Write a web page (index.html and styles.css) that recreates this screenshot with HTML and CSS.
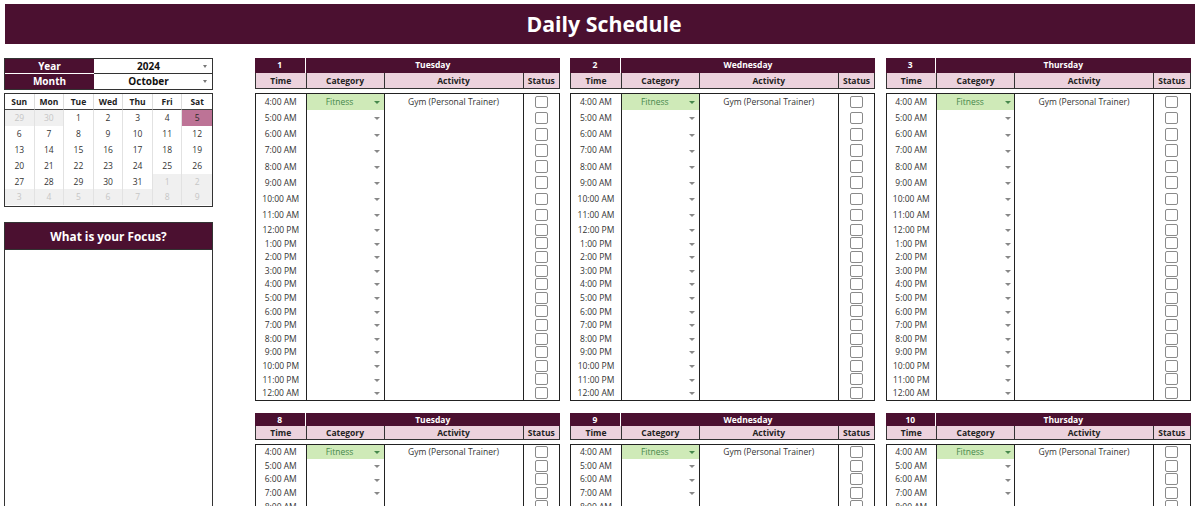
FILE: index.html
```html
<!DOCTYPE html>
<html lang="en">
<head>
<meta charset="utf-8">
<title>Daily Schedule</title>
<link rel="stylesheet" href="styles.css">
<script src="app.js" defer></script>
</head>
<body>
<header class="title">Daily Schedule</header>
<main class="page">
  <aside class="side">
    <div class="picker">
      <div class="picker-label">Year</div><div class="picker-value dd">2024</div>
      <div class="picker-label">Month</div><div class="picker-value dd">October</div>
    </div>
    <div class="cal" id="cal"></div>
    <section class="focus">
      <h2 class="focus-head">What is your Focus?</h2>
    </section>
  </aside>
  <div class="days" id="days"></div>
</main>
</body>
</html>
```
FILE: styles.css
```css
* { box-sizing: border-box; }
html, body { margin: 0; height: 506px; overflow: hidden; background: #fff; }
body { padding: 4px 5px 0; font-family: "Open Sans", sans-serif; font-size: 8.5px; color: #333; }
.title { height: 40px; padding: 0 0 0 8px; background: #4b1030; color: #fff; font-size: 21.3px; font-weight: 700; line-height: 39px; text-align: center; }
.page { display: flex; margin-top: 14px; gap: 42px; align-items: flex-start; }
.side { width: 209px; flex: none; margin-left: -1px; display: flex; flex-direction: column; }
.picker { display: grid; grid-template-columns: 89px 1fr; grid-template-rows: 15px 15px; border: 1px solid #333; height: 32px; row-gap: 0; }
.picker-label { background: #4b1030; color: #fff; font-weight: 700; font-size: 10px; line-height: 15px; text-align: center; border-bottom: 1px solid #fff; }
.picker-value { padding-right: 9px; font-weight: 700; font-size: 10px; color: #111; line-height: 15px; text-align: center; border-bottom: 1px solid #333; position: relative; }
.picker-value:last-child, .picker-label:nth-last-child(2) { border-bottom: 0; }
.dd::after { content: ""; position: absolute; right: 5px; top: 6px; border: 2.5px solid transparent; border-top: 3px solid #777; border-bottom: 0; }
.cal { margin-top: 3px; border: 1px solid #333; display: grid; grid-template-columns: repeat(7, 1fr); grid-template-rows: 16px repeat(6, 15.9px); height: 113.5px; }
.cal-h { font-weight: 700; color: #222; text-align: center; line-height: 15px; border-bottom: 1px solid #444; border-right: 1px solid #ddd; }
.cal-d { text-align: center; line-height: 15.9px; border-right: 1px solid #e2e2e2; color: #333; }
.cal-h:nth-child(7n), .cal-d:nth-child(7n) { border-right: 0; }
.cal-d.off { background: #f0f0f0; color: #c6c6c6; }
.cal-d.today { background: #bd7396; color: #2a2a2a; }
.focus { margin-top: 15.5px; height: 290px; border: 1px solid #333; }
.focus-head { margin: 0; height: 27px; background: #4b1030; color: #fff; font-size: 11.8px; font-weight: 700; line-height: 27px; text-align: center; border-bottom: 1px solid #333; }
.days { display: grid; grid-template-columns: repeat(3, 305px); column-gap: 10.25px; row-gap: 12.5px; }
.day { display: flex; flex-direction: column; }
.cols { display: grid; grid-template-columns: 50.5px 78px 139px 1fr; }
.top { display: grid; grid-template-columns: 50.5px 1fr; height: 15px; background: #4b1030; color: #fff; font-weight: 700; line-height: 14px; text-align: center; }
.top > :first-child { border-right: 1px solid #fff; }
.heads { height: 16px; background: #ecd2dd; color: #222; font-weight: 700; line-height: 15px; text-align: center; border-bottom: 1px solid #333; border-left: 1px solid #333; border-right: 1px solid #333; }
.heads > div { border-right: 1px solid #333; }
.heads > div:last-child { border-right: 0; }
.day.second .top { height: 13px; line-height: 13px; }
.day.second .heads { height: 14px; line-height: 13px; }
.sched { margin-top: 4px; border: 1px solid #222; }
.row { height: 16.13px; line-height: 16px; text-align: center; }
.row.short { height: 13.6px; line-height: 13.6px; }
.row > div { border-right: 1px solid #222; height: 100%; position: relative; }
.row > div:last-child { border-right: 0; }
.cat { padding-right: 11px; }
.cat::after { content: ""; position: absolute; right: 3.5px; top: 45%; border: 3px solid transparent; border-top: 3px solid #888; border-bottom: 0; }
.cat.fit { background: #cfeab8; color: #47884c; }
.cat.fit::after { border-top-color: #47884c; }
.st { display: flex; align-items: center; justify-content: center; }
.st::before { content: ""; width: 11px; height: 10.5px; border: 1.5px solid #8a8a8a; border-radius: 2px; background: #fff; }
.row.short .st::before { height: 10px; }
```
FILE: app.js
```js
const cal = document.getElementById('cal');
const hs = ['Sun','Mon','Tue','Wed','Thu','Fri','Sat'];
const ds = [29,30,1,2,3,4,5,6,7,8,9,10,11,12,13,14,15,16,17,18,19,20,21,22,23,24,25,26,27,28,29,30,31,1,2,3,4,5,6,7,8,9];
let h = hs.map(d => `<div class="cal-h">${d}</div>`).join('');
ds.forEach((d, i) => {
  const off = i < 2 || i > 32;
  const cls = off ? ' off' : (i === 6 ? ' today' : '');
  h += `<div class="cal-d${cls}">${d}</div>`;
});
cal.innerHTML = h;

const times = ['4:00 AM','5:00 AM','6:00 AM','7:00 AM','8:00 AM','9:00 AM','10:00 AM','11:00 AM','12:00 PM','1:00 PM','2:00 PM','3:00 PM','4:00 PM','5:00 PM','6:00 PM','7:00 PM','8:00 PM','9:00 PM','10:00 PM','11:00 PM','12:00 AM'];
const days = [[1,'Tuesday',0],[2,'Wednesday',0],[3,'Thursday',0],[8,'Tuesday',1],[9,'Wednesday',1],[10,'Thursday',1]];
document.getElementById('days').innerHTML = days.map(([n, name, second]) => {
  const list = second ? times.slice(0, 5) : times;
  const rows = list.map((t, i) => {
    const short = second || i >= 8;
    return `<div class="cols row${short ? ' short' : ''}"><div>${t}</div><div class="cat${i === 0 ? ' fit' : ''}">${i === 0 ? 'Fitness' : ''}</div><div>${i === 0 ? 'Gym (Personal Trainer)' : ''}</div><div class="st"></div></div>`;
  }).join('');
  return `<section class="day${second ? ' second' : ''}"><div class="top"><div>${n}</div><div>${name}</div></div><div class="cols heads"><div>Time</div><div>Category</div><div>Activity</div><div>Status</div></div><div class="sched">${rows}</div></section>`;
}).join('');
```
